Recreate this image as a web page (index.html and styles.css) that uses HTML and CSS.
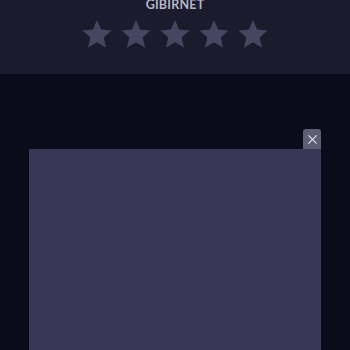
FILE: index.html
```html
<!DOCTYPE html>
<html>
<head>
<meta charset="utf-8">
<link rel="stylesheet" href="styles.css">
</head>
<body>
<header class="header">
  <div class="title">GIBIRNET</div>
  <div class="stars">
    <svg class="star" viewBox="0 0 24 24"><path d="M12 1.5l3.1 7.2 7.8.7-5.9 5.2 1.8 7.7L12 18.2l-6.8 4.1 1.8-7.7-5.9-5.2 7.8-.7z"/></svg>
    <svg class="star" viewBox="0 0 24 24"><path d="M12 1.5l3.1 7.2 7.8.7-5.9 5.2 1.8 7.7L12 18.2l-6.8 4.1 1.8-7.7-5.9-5.2 7.8-.7z"/></svg>
    <svg class="star" viewBox="0 0 24 24"><path d="M12 1.5l3.1 7.2 7.8.7-5.9 5.2 1.8 7.7L12 18.2l-6.8 4.1 1.8-7.7-5.9-5.2 7.8-.7z"/></svg>
    <svg class="star" viewBox="0 0 24 24"><path d="M12 1.5l3.1 7.2 7.8.7-5.9 5.2 1.8 7.7L12 18.2l-6.8 4.1 1.8-7.7-5.9-5.2 7.8-.7z"/></svg>
    <svg class="star" viewBox="0 0 24 24"><path d="M12 1.5l3.1 7.2 7.8.7-5.9 5.2 1.8 7.7L12 18.2l-6.8 4.1 1.8-7.7-5.9-5.2 7.8-.7z"/></svg>
  </div>
</header>
<main class="main">
  <div class="modal">
    <button class="close" aria-label="Close">
      <svg viewBox="0 0 12 12"><path d="M1.5 1.5l9 9M10.5 1.5l-9 9"/></svg>
    </button>
  </div>
</main>
</body>
</html>
```
FILE: styles.css
```css
html, body {
  margin: 0;
  padding: 0;
  height: 100%;
  overflow: hidden;
  background: #0b0b1a;
}
.header {
  height: 74px;
  background: #1b1b2d;
  display: flex;
  flex-direction: column;
  align-items: center;
  overflow: hidden;
}
.title {
  font-family: "Lato", "Open Sans", sans-serif;
  font-weight: 700;
  font-size: 12.5px;
  letter-spacing: 0.2px;
  color: #b5b6c8;
  line-height: 12px;
  margin-top: -1px;
}
.stars {
  display: flex;
  gap: 7px;
  margin-top: 7px;
}
.star {
  width: 32px;
  height: 32px;
  fill: #45465f;
}
.main {
  padding: 75px 29px 0 29px;
}
.modal {
  position: relative;
  height: 201px;
  background: #37375a;
}
.close {
  position: absolute;
  right: 0;
  top: -20px;
  width: 18px;
  height: 20px;
  padding: 0;
  border: none;
  border-radius: 3px 3px 0 0;
  background: #5d5d74;
  display: flex;
  align-items: center;
  justify-content: center;
}
.close svg {
  width: 11px;
  height: 11px;
  stroke: #e2e2ea;
  stroke-width: 1.3;
  fill: none;
}
```
